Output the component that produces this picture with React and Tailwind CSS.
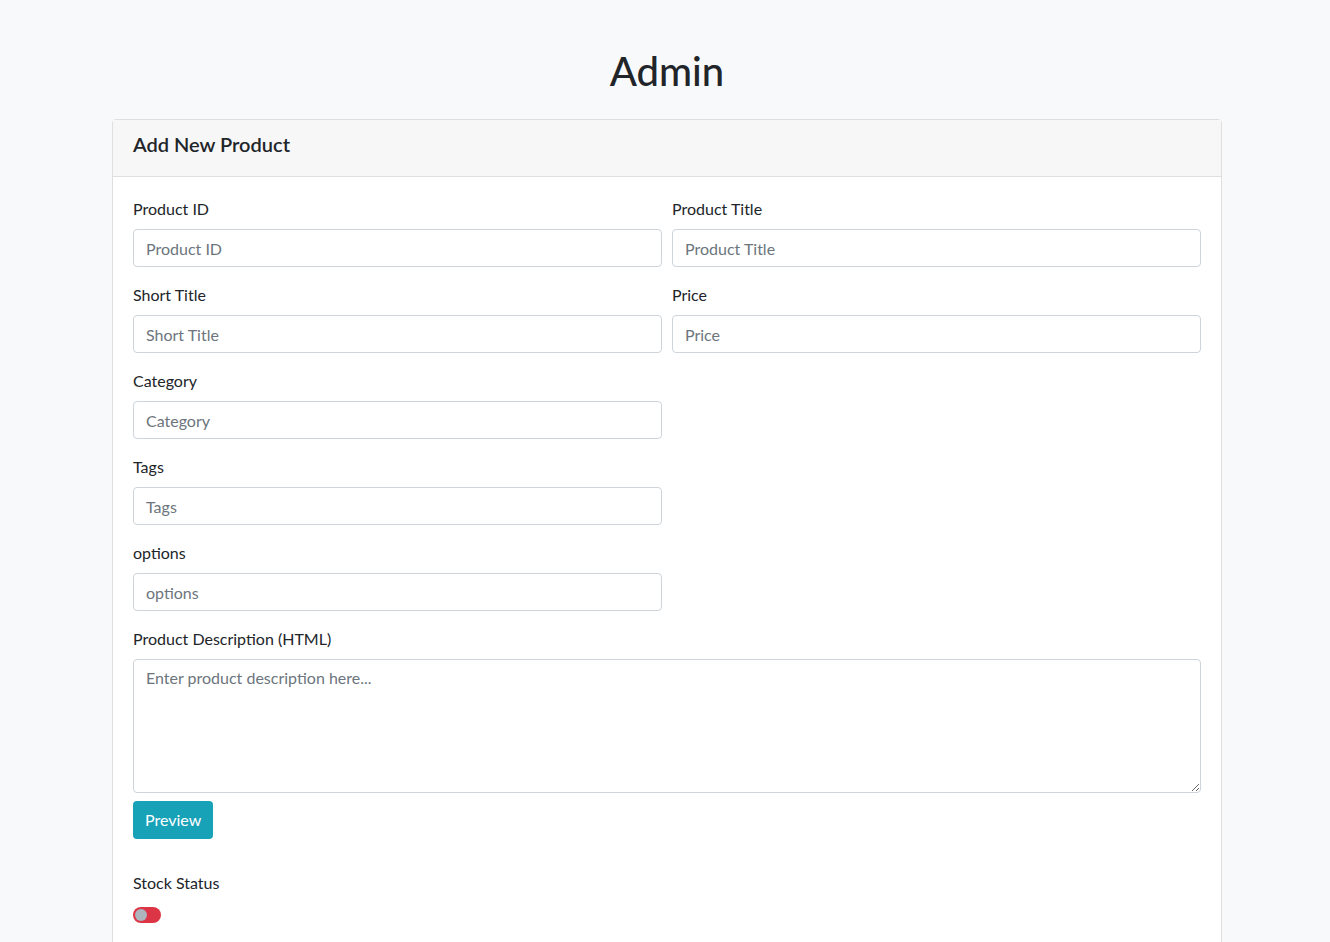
export default function App() {
  const Field = ({ label }) => (
    <div className="mb-4 px-[5px]">
      <label className="mb-2 block text-base leading-6 text-[#212529]">{label}</label>
      <input
        placeholder={label}
        className="block h-[38px] w-full rounded border border-[#ced4da] bg-white px-3 py-1.5 text-base leading-6 text-[#495057] outline-none placeholder:text-[#6c757d]"
      />
    </div>
  );
  return (
    <div className="min-h-[942px] bg-[#f8f9fa] pl-[4px] pt-[47px] font-['Lato','Liberation_Sans',sans-serif] text-[#212529]">
      <div className="mx-auto w-[1140px] px-[15px] pb-6">
        <h1 className="mb-6 text-center text-[40px] font-medium leading-[48px]">Admin</h1>
        <div className="rounded border border-[#dfdfdf] bg-white">
          <div className="border-b border-[#dfdfdf] bg-[#f7f7f7] px-5 py-3">
            <h5 className="mb-2 text-xl font-semibold leading-6">Add New Product</h5>
          </div>
          <div className="p-5">
            <div className="-mx-[5px] grid grid-cols-2">
              <Field label="Product ID" />
              <Field label="Product Title" />
              <Field label="Short Title" />
              <Field label="Price" />
              <Field label="Category" />
              <div />
              <Field label="Tags" />
              <div />
              <Field label="options" />
              <div />
            </div>
            <div>
              <label className="mb-2 block text-base leading-6">Product Description (HTML)</label>
              <textarea
                rows={5}
                placeholder="Enter product description here..."
                className="block h-[134px] w-full rounded border border-[#ced4da] bg-white px-3 py-1.5 text-base leading-6 text-[#495057] outline-none placeholder:text-[#6c757d]"
              />
              <button className="mt-2 h-[38px] rounded bg-[#17a2b8] px-3 text-base leading-6 text-white">
                Preview
              </button>
            </div>
            <div className="mt-8 mb-4">
              <label className="mb-2 block text-base leading-6">Stock Status</label>
              <div className="flex h-6 items-center">
                <div className="flex h-4 w-7 items-center rounded-full bg-[#dc3545] px-[2px]">
                  <div className="h-3 w-3 rounded-full bg-[#adb5bd]" />
                </div>
              </div>
            </div>
          </div>
        </div>
      </div>
    </div>
  );
}
